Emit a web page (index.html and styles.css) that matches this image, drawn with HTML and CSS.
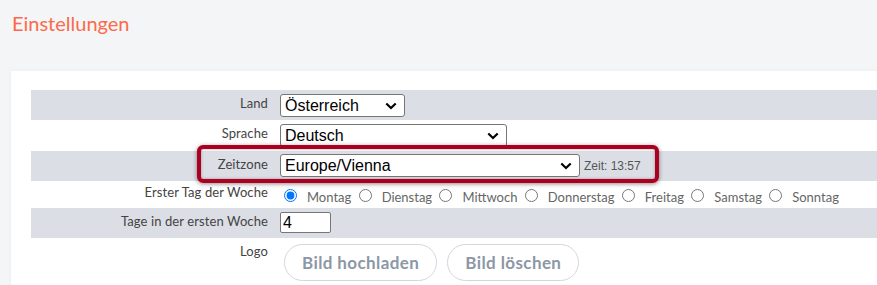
FILE: index.html
```html
<!DOCTYPE html>
<html lang="de">
<head>
  <meta charset="UTF-8">
  <meta name="viewport" content="width=device-width, initial-scale=1.0">
  <title>Einstellungen</title>
  <link rel="stylesheet" href="styles.css">
</head>
<body>

  <!-- Page title -->
  <h1 class="page-title">Einstellungen</h1>

  <div class="card">
    <div class="settings">

      <div class="row row-alt row-land">
        <div class="label">Land</div>
        <div class="field">
          <div class="select select-land"><span>Österreich</span>
            <svg class="chevron" width="12" height="8" viewBox="0 0 12 8"><path d="M1.3 1.5 L6 6 L10.7 1.5" fill="none" stroke="#000" stroke-width="2.2"/></svg>
          </div>
        </div>
      </div>

      <div class="row row-lang">
        <div class="label">Sprache</div>
        <div class="field">
          <div class="select select-lang"><span>Deutsch</span>
            <svg class="chevron" width="12" height="8" viewBox="0 0 12 8"><path d="M1.3 1.5 L6 6 L10.7 1.5" fill="none" stroke="#000" stroke-width="2.2"/></svg>
          </div>
        </div>
      </div>

      <div class="row row-alt row-zone">
        <div class="label">Zeitzone</div>
        <div class="field">
          <div class="select select-zone"><span>Europe/Vienna</span>
            <svg class="chevron" width="12" height="8" viewBox="0 0 12 8"><path d="M1.3 1.5 L6 6 L10.7 1.5" fill="none" stroke="#000" stroke-width="2.2"/></svg>
          </div>
          <span class="clock">Zeit: 13:57</span>
        </div>
      </div>

      <div class="row row-days">
        <div class="label">Erster Tag der Woche</div>
        <div class="field field-days">
          <label class="day"><input type="radio" name="firstday" checked><span>Montag</span></label>
          <label class="day"><input type="radio" name="firstday"><span>Dienstag</span></label>
          <label class="day"><input type="radio" name="firstday"><span>Mittwoch</span></label>
          <label class="day"><input type="radio" name="firstday"><span>Donnerstag</span></label>
          <label class="day"><input type="radio" name="firstday"><span>Freitag</span></label>
          <label class="day"><input type="radio" name="firstday"><span>Samstag</span></label>
          <label class="day"><input type="radio" name="firstday"><span>Sonntag</span></label>
        </div>
      </div>

      <div class="row row-alt row-week">
        <div class="label">Tage in der ersten Woche</div>
        <div class="field">
          <input class="num" type="text" value="4">
        </div>
      </div>

      <div class="row row-logo">
        <div class="label">Logo</div>
        <div class="field field-buttons">
          <button class="pill">Bild hochladen</button>
          <button class="pill">Bild löschen</button>
        </div>
      </div>

    </div>

    <!-- annotation frame around the time zone row -->
    <div class="highlight"></div>
  </div>

</body>
</html>
```

FILE: styles.css
```css
body {
  margin: 0;
  background-color: #f4f5f7;
  font-family: Lato, "Noto Sans", sans-serif;
  overflow: hidden;
}

.page-title {
  margin: 11px 0 36px 12px;
  font-size: 20px;
  line-height: 24px;
  font-weight: 400;
  color: #fb6a4b;
}

.card {
  position: relative;
  margin-left: 11px;
  padding: 19px 0 40px 20px;
  background-color: #fff;
  box-shadow: 0 0 4px rgba(0, 0, 0, 0.04);
}

.row {
  display: grid;
  grid-template-columns: 249px 1fr;
  height: 30px;
}

.row-alt {
  background-color: #dbdee5;
}

.row-lang {
  height: 31px;
}

.row-days {
  height: 27px;
}

.row-logo {
  height: 60px;
}

.label {
  padding: 5px 12px 0 0;
  text-align: right;
  font-size: 13px;
  line-height: 16px;
  letter-spacing: 0.1px;
  color: #444;
}

.row-days .label {
  padding-top: 3px;
}

.field {
  display: flex;
  align-items: center;
  align-self: start;
  padding-top: 4px;
}

.row-zone .field {
  padding-top: 3px;
}

.select {
  display: flex;
  align-items: center;
  box-sizing: border-box;
  height: 23px;
  padding: 0 7px 0 4px;
  border: 1px solid #767676;
  border-radius: 3px;
  background-color: #fff;
  font-family: "Liberation Sans", Arial, sans-serif;
  font-size: 16px;
  color: #000;
}

.select span {
  flex: 1;
}

.select-land { width: 125px; }
.select-lang { width: 227px; }
.select-zone { width: 300px; }

.clock {
  margin-left: 4px;
  font-family: "Liberation Sans", Arial, sans-serif;
  font-size: 12px;
  color: #555;
}

.field-days {
  display: block;
  padding-top: 5px;
  font-size: 13px;
  color: #666;
}

.day input {
  width: 13px;
  height: 13px;
  margin: 3px 3px 0 4px;
}

.day span {
  padding-left: 7px;
}

.num {
  box-sizing: border-box;
  width: 51px;
  height: 21px;
  padding: 0 2px;
  border: 1px solid #767676;
  border-radius: 2px;
  font-family: "Liberation Sans", Arial, sans-serif;
  font-size: 16px;
}

.field-buttons {
  gap: 10px;
  padding: 6px 0 0 4px;
}

.pill {
  height: 37px;
  padding: 0 17px;
  border: 1.5px solid #d2d7de;
  border-radius: 19px;
  background-color: #fff;
  font-family: Lato, "Noto Sans", sans-serif;
  font-size: 17px;
  font-weight: 700;
  letter-spacing: 0.4px;
  color: #8c97a6;
}

.highlight {
  position: absolute;
  left: 186px;
  top: 74px;
  width: 462px;
  height: 38px;
  box-sizing: border-box;
  border: 4px solid #ad0020;
  border-radius: 6px;
  box-shadow: 0 1px 4px rgba(0, 0, 0, 0.45), inset 0 0 3px rgba(0, 0, 0, 0.35);
}
```
